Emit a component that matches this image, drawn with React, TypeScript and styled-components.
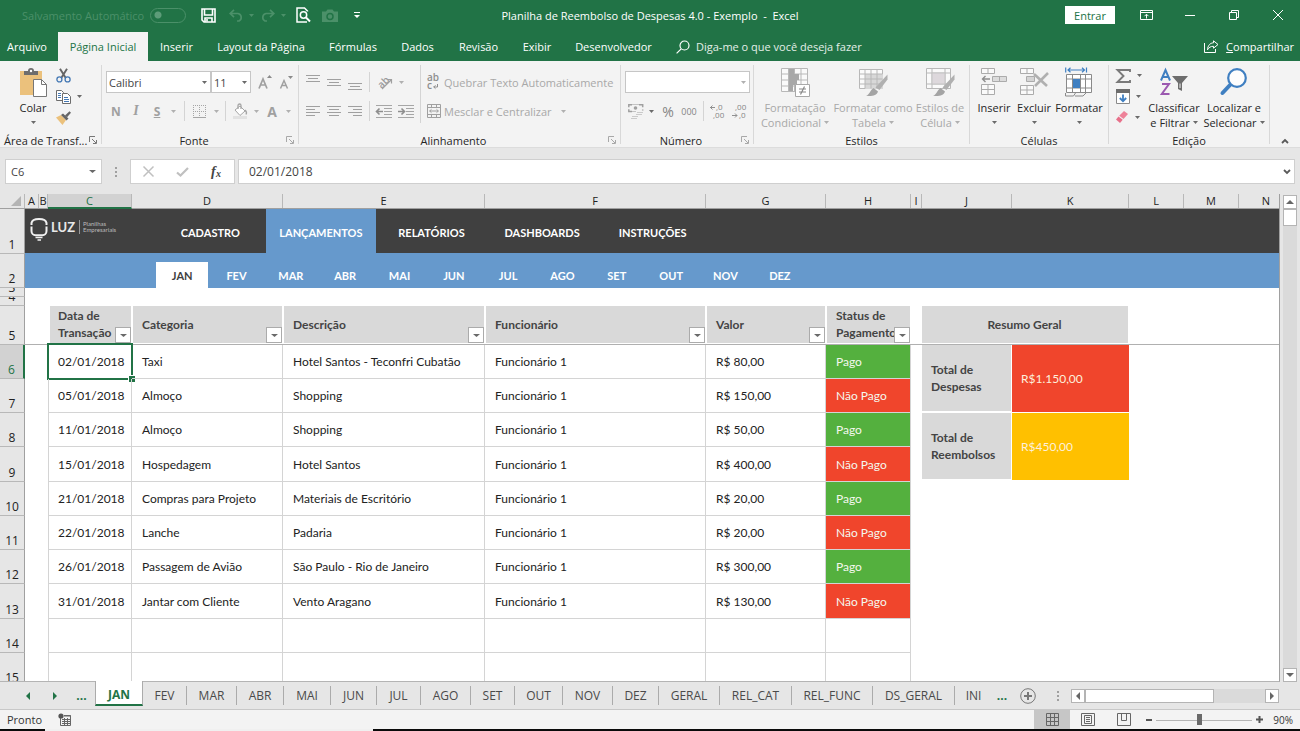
import React from "react";
import styled, { createGlobalStyle, css } from "styled-components";

const GREEN = "#217346";
const UI_FONT = '"Open Sans", "Noto Sans", sans-serif';
const CELL_FONT = 'Lato, "Open Sans", sans-serif';

const GlobalStyle = createGlobalStyle`
  * { box-sizing: border-box; }
  body { margin: 0; background: #e6e6e6; font-family: ${UI_FONT}; font-size: 11px; color: #262626; }
  button, input, select { font: inherit; color: inherit; margin: 0; padding: 0; border: 0; background: none; border-radius: 0; outline: none; }
  button { cursor: default; }
  a { color: inherit; text-decoration: none; }
  svg { display: block; flex: none; overflow: visible; }
`;

/* ---------- shell ---------- */

const Window = styled.div`
  display: flex;
  flex-direction: column;
  height: 100vh;
  overflow: hidden;
  background: #e6e6e6;
`;

const TitleBar = styled.header`
  display: grid;
  grid-template-columns: 1fr auto 1fr;
  align-items: center;
  height: 32px;
  padding-bottom: 2px;
  background: ${GREEN};
  color: #fff;
`;

const QuickAccess = styled.div`
  display: flex;
  align-items: center;
  padding-left: 22px;
`;

const AutoSave = styled.label`
  display: flex;
  align-items: center;
  gap: 6px;
  width: 165px;
  color: #4b9069;
  white-space: nowrap;
`;

const Toggle = styled.input`
  appearance: none;
  flex: none;
  width: 36px;
  height: 15px;
  border: 1px solid #4b9069;
  border-radius: 8px;
  background: radial-gradient(circle at 7px 6px, #5d9c79 3px, transparent 4px);
`;

const QuickButton = styled.button<{ $w: number; $dim?: boolean }>`
  display: flex;
  align-items: center;
  justify-content: center;
  width: ${(p) => p.$w}px;
  height: 24px;
  color: ${(p) => (p.$dim ? "#4b9069" : "#fff")};
`;

const DocTitle = styled.h1`
  margin: 0;
  font-size: 11px;
  font-weight: 400;
  white-space: pre;
`;

const WindowControls = styled.div`
  display: flex;
  align-items: center;
  justify-content: flex-end;
`;

const SignIn = styled.button`
  width: 50px;
  height: 18px;
  margin-right: 9px;
  background: #fff;
  color: ${GREEN};
`;

const WindowButton = styled.button`
  display: flex;
  align-items: center;
  justify-content: center;
  width: 44px;
  height: 30px;
`;

const MenuBar = styled.nav`
  display: flex;
  align-items: stretch;
  height: 29px;
  background: ${GREEN};
  color: #fff;
`;

const MenuTab = styled.button<{ $w: number; $active?: boolean }>`
  width: ${(p) => p.$w}px;
  white-space: nowrap;
  ${(p) => p.$active && css`background: #f3f3f3; color: ${GREEN};`}
  &:first-child { padding-right: 4px; }
`;

const TellMe = styled.label`
  display: flex;
  align-items: center;
  flex: 1;
  gap: 6px;
  padding-left: 12px;
  input { width: 200px; color: #e4efe8; }
  input::placeholder { color: #e4efe8; opacity: 1; }
`;

const Share = styled.button`
  display: flex;
  align-items: center;
  gap: 7px;
  padding-right: 6px;
`;

/* ---------- ribbon ---------- */

const Ribbon = styled.section`
  display: flex;
  height: 87px;
  padding: 4px 0 3px;
  background: #f3f3f3;
  border-bottom: 1px solid #dcdcdc;
`;

const Group = styled.div<{ $w: number }>`
  display: flex;
  flex-direction: column;
  width: ${(p) => p.$w}px;
  border-right: 1px solid #d8d8d8;
`;

const GroupBody = styled.div<{ $pad?: number }>`
  display: flex;
  flex: none;
  height: 66px;
  padding-left: ${(p) => p.$pad ?? 0}px;
`;

const GroupFooter = styled.div`
  display: flex;
  align-items: center;
  flex: none;
  height: 18px;
  text-align: center;
  white-space: nowrap;
`;

const GroupName = styled.span<{ $start?: boolean }>`
  flex: 1;
  ${(p) => p.$start && css`padding-left: 4px; text-align: left;`}
`;

const LauncherButton = styled.button`
  width: 12px;
`;

const Rows = styled.div<{ $w?: number; $pad?: number }>`
  display: flex;
  flex-direction: column;
  gap: 7px;
  padding-top: 6px;
  padding-left: ${(p) => p.$pad ?? 0}px;
  width: ${(p) => (p.$w ? p.$w + "px" : "auto")};
`;

const Row = styled.div`
  display: flex;
  align-items: center;
  height: 22px;
`;

const Tool = styled.button<{ $w: number }>`
  display: flex;
  align-items: center;
  justify-content: center;
  flex: none;
  width: ${(p) => p.$w}px;
  height: 22px;
  color: #a0a0a0;
`;

const Gap = styled.span<{ $w: number }>`
  flex: none;
  width: ${(p) => p.$w}px;
`;

const Letter = styled.span<{ $kind?: "italic" | "underline"; $size?: number; $light?: boolean }>`
  font-size: ${(p) => p.$size ?? 12}px;
  font-weight: ${(p) => (p.$light ? 400 : 700)};
  ${(p) => p.$light && css`color: #858585;`}
  ${(p) => p.$kind === "italic" && css`font-family: "Liberation Serif", serif; font-style: italic; font-size: 14px;`}
  ${(p) => p.$kind === "underline" && css`text-decoration: underline;`}
`;

const ToolText = styled.button<{ $gap?: number }>`
  display: flex;
  align-items: center;
  gap: ${(p) => p.$gap ?? 3}px;
  height: 22px;
  color: #a8a8a8;
  white-space: nowrap;
`;

const Divider = styled.span<{ $h?: number }>`
  flex: none;
  width: 1px;
  height: ${(p) => p.$h ?? 20}px;
  background: #d4d4d4;
`;

const SelectBox = styled.div<{ $w: number }>`
  position: relative;
  width: ${(p) => p.$w}px;
  height: 22px;
  select {
    appearance: none;
    width: 100%;
    height: 22px;
    padding-left: 2px;
    border: 1px solid #c6c6c6;
    background: #fff;
    color: #444;
  }
  svg { position: absolute; right: 4px; top: 10px; pointer-events: none; }
`;

const BigTool = styled.button<{ $w: number; $dim?: boolean }>`
  display: flex;
  flex-direction: column;
  align-items: center;
  flex: none;
  width: ${(p) => p.$w}px;
  height: 66px;
  padding-top: 3px;
  line-height: 15px;
  white-space: nowrap;
  color: ${(p) => (p.$dim ? "#a8a8a8" : "#262626")};
  > svg:first-child { height: 29px; margin-bottom: 3px; }
  > svg:last-child { margin-top: 6px; }
`;

const CaretLine = styled.span`
  display: flex;
  align-items: center;
  gap: 3px;
`;

const ToolStack = styled.div<{ $w: number }>`
  display: flex;
  flex-direction: column;
  width: ${(p) => p.$w}px;
`;

const StackTool = styled.button`
  display: flex;
  align-items: center;
  gap: 6px;
  height: 21px;
`;

const RibbonEnd = styled.div`
  display: flex;
  flex: 1;
  align-items: flex-end;
  justify-content: center;
`;

/* ---------- formula bar ---------- */

const FormulaBar = styled.div`
  display: flex;
  height: 46px;
  padding: 11px 5px 10px;
`;

const NameBox = styled.div`
  display: flex;
  align-items: center;
  justify-content: space-between;
  width: 97px;
  padding: 0 5px;
  border: 1px solid #cfcfcf;
  background: #fff;
  input { width: 60px; color: #444; }
`;

const Grip = styled.div<{ $w: number }>`
  display: flex;
  align-items: center;
  justify-content: center;
  width: ${(p) => p.$w}px;
`;

const EntryButtons = styled.div`
  display: flex;
  align-items: center;
  width: 105px;
  border: 1px solid #cfcfcf;
  background: #fff;
`;

const EntryButton = styled.button`
  display: flex;
  justify-content: center;
  width: 34px;
  color: #c0c0c0;
`;

const FormulaField = styled.div`
  display: flex;
  flex: 1;
  align-items: center;
  margin-left: 3px;
  padding: 0 3px 0 10px;
  border: 1px solid #cfcfcf;
  background: #fff;
  input { flex: 1; font-size: 12px; color: #444; }
`;

/* ---------- sheet ---------- */

const Workspace = styled.main`
  display: flex;
  flex: 1;
  min-height: 0;
`;

const SheetPane = styled.div`
  display: flex;
  flex: 1;
  flex-direction: column;
  min-width: 0;
  border-right: 1px solid #a0a0a0;
  border-bottom: 1px solid #b4b4b4;
  overflow: hidden;
`;

const ColumnHeads = styled.div`
  display: flex;
  flex: none;
  height: 15px;
  border-bottom: 1px solid #a0a0a0;
`;

const Corner = styled.div`
  display: flex;
  flex: none;
  justify-content: flex-end;
  width: 25px;
  padding: 2px 3px 0 0;
  border-right: 1px solid #b8b8b8;
`;

const ColumnHead = styled.div<{ $w: number; $on?: boolean }>`
  flex: none;
  width: ${(p) => p.$w}px;
  border-right: 1px solid #b8b8b8;
  font-size: 11px;
  line-height: 14px;
  text-align: center;
  color: #222;
  ${(p) => p.$on && css`height: 15px; background: #d2d2d2; color: ${GREEN}; border-bottom: 2px solid ${GREEN};`}
`;

const SheetBody = styled.div`
  display: flex;
  flex: 1;
  min-height: 0;
`;

const RowHeads = styled.div`
  flex: none;
  width: 25px;
  overflow: hidden;
`;

const RowHead = styled.div<{ $h: number; $on?: boolean }>`
  display: flex;
  align-items: flex-end;
  justify-content: center;
  height: ${(p) => p.$h}px;
  overflow: hidden;
  border-right: 1px solid #a0a0a0;
  border-bottom: 1px solid #b8b8b8;
  font-size: 12px;
  line-height: 16px;
  color: #222;
  ${(p) => p.$on && css`background: #d2d2d2; color: ${GREEN}; border-right: 2px solid ${GREEN};`}
`;

const Canvas = styled.div`
  flex: 1;
  min-width: 0;
  overflow: hidden;
  background: #fff;
  font-family: ${CELL_FONT};
  font-size: 12px;
`;

const SiteNav = styled.nav`
  display: flex;
  height: 44px;
  background: #404040;
  color: #fff;
`;

const Brand = styled.a`
  display: flex;
  align-items: flex-start;
  width: 130px;
  padding: 8px 0 0 5px;
`;

const BrandName = styled.span`
  padding: 0 4px 0 3px;
  font-size: 13px;
  font-weight: 700;
  line-height: 20px;
  color: #e8e8e8;
`;

const BrandTag = styled.span`
  margin-top: 3px;
  padding: 1px 0 1px 3px;
  border-left: 1px solid #999;
  font-size: 6px;
  line-height: 6px;
  color: #bdbdbd;
`;

const NavLinks = styled.div`
  display: grid;
  grid-template-columns: repeat(5, 1fr);
  width: 553px;
  font-size: 11px;
`;

const NavLink = styled.a<{ $on?: boolean }>`
  display: flex;
  align-items: center;
  justify-content: center;
  padding-top: 2px;
  font-weight: 700;
  background: ${(p) => (p.$on ? "#6699cc" : "transparent")};
`;

const MonthBar = styled.nav`
  height: 35px;
  padding: 9px 0 0 130px;
  background: #6699cc;
  font-size: 11px;
`;

const Months = styled.div`
  display: grid;
  grid-template-columns: repeat(12, 1fr);
  width: 652px;
  height: 26px;
`;

const Month = styled.a<{ $on?: boolean }>`
  display: flex;
  align-items: center;
  justify-content: center;
  margin: 0 1px;
  font-weight: 700;
  color: ${(p) => (p.$on ? "#404040" : "#fff")};
  background: ${(p) => (p.$on ? "#fff" : "transparent")};
`;

/* The frozen-pane line runs under both tables' header rows. */
const Content = styled.div`
  display: flex;
  align-items: flex-start;
  margin-top: 17px;
  padding-left: 23px;
  background: linear-gradient(#b0b0b0, #b0b0b0) 0 39px / 100% 1px no-repeat;
`;

const Grid = styled.table<{ $w: number }>`
  flex: none;
  width: ${(p) => p.$w}px;
  table-layout: fixed;
  border-collapse: separate;
  border-spacing: 0;
`;

const HeadCell = styled.th`
  position: relative;
  height: 40px;
  padding: 0 9px 1px;
  border: solid transparent;
  border-width: 1px 1px 2px 1px;
  background: #d9d9d9 padding-box;
  color: #444;
  font-weight: 700;
  line-height: 17px;
  text-align: left;
  white-space: nowrap;
  &:first-child { border-left-width: 2px; padding-left: 8px; }
`;

const FilterButton = styled.button`
  position: absolute;
  right: 0;
  bottom: 0;
  display: flex;
  align-items: center;
  justify-content: center;
  width: 16px;
  height: 16px;
  border: 1px solid #ababab;
  background: #fff;
`;

const Cell = styled.td<{ $h: number; $fill?: string }>`
  position: relative;
  height: ${(p) => p.$h}px;
  padding: 0 10px;
  border: solid #d4d4d4;
  border-width: 0 1px 1px 0;
  color: #222;
  white-space: nowrap;
  &:first-child { border-left-width: 1px; padding: 0 9px; }
  ${(p) => p.$fill && css`background: ${p.$fill} padding-box; color: #f4f8ee;`}
`;

const Selection = styled.span`
  position: absolute;
  inset: -2px;
  border: 2px solid ${GREEN};
  &::after {
    content: "";
    position: absolute;
    right: -4px;
    bottom: -4px;
    width: 6px;
    height: 6px;
    border: solid #fff;
    border-width: 1px 0 0 1px;
    background: ${GREEN};
  }
`;

const SummaryGap = styled.div`
  flex: none;
  width: 11px;
`;

const SummaryTitle = styled(HeadCell)`
  text-align: center;
  &:first-child { border-left-width: 0; }
`;

const SummaryLabel = styled.th`
  height: 68px;
  padding: 0 9px 1px;
  border: solid transparent;
  border-width: 0 1px 2px 0;
  background: #d9d9d9 padding-box;
  color: #444;
  line-height: 17px;
  text-align: left;
`;

const SummaryValue = styled.td<{ $fill: string }>`
  padding: 0 9px;
  border-bottom: 1px solid transparent;
  background: ${(p) => p.$fill} padding-box;
  color: #fdf0dc;
`;

/* ---------- scroll bars ---------- */

const VScroll = styled.div`
  display: flex;
  flex: none;
  flex-direction: column;
  width: 20px;
  padding: 1px 3px 0;
`;

const ScrollButton = styled.button`
  display: flex;
  flex: none;
  align-items: center;
  justify-content: center;
  width: 14px;
  height: 14px;
  border: 1px solid #b4b4b4;
  background: #fff;
`;

const VTrack = styled.div`
  flex: 1;
  background: #dadada;
`;

const VThumb = styled.div`
  height: 17px;
  border: 1px solid #b4b4b4;
  background: #fff;
`;

const HScroll = styled.div`
  display: flex;
  flex: none;
  width: 208px;
  height: 14px;
`;

const HTrack = styled.div`
  flex: 1;
  background: #dadada;
`;

const HThumb = styled.div`
  width: 129px;
  height: 14px;
  border: 1px solid #b4b4b4;
  background: #fff;
`;

/* ---------- sheet tabs and status ---------- */

const TabBar = styled.div`
  display: flex;
  flex: none;
  align-items: center;
  height: 27px;
  padding-right: 21px;
  font-size: 12px;
  color: #4a4a4a;
`;

const TabArrow = styled.button<{ $pad?: number }>`
  display: flex;
  flex: none;
  justify-content: center;
  width: 27px;
  margin-left: ${(p) => p.$pad ?? 0}px;
`;

const More = styled.button<{ $w: number }>`
  display: flex;
  flex: none;
  justify-content: center;
  width: ${(p) => p.$w}px;
  font-weight: 700;
  color: ${GREEN};
`;

const SheetTab = styled.button<{ $w: number; $on?: boolean; $last?: boolean }>`
  flex: none;
  width: ${(p) => p.$w}px;
  height: 19px;
  border-right: 1px solid ${(p) => (p.$last ? "transparent" : "#ababab")};
  white-space: nowrap;
  ${(p) => p.$on && css`
    align-self: flex-start;
    height: 25px;
    margin-top: -1px;
    padding-top: 4px;
    border: solid #ababab;
    border-width: 0 1px 0 1px;
    border-bottom: 2px solid ${GREEN};
    background: #fff;
    color: ${GREEN};
    font-weight: 700;
  `}
`;

const TabSpacer = styled.div`
  flex: 1;
`;

const StatusBar = styled.footer`
  display: flex;
  flex: none;
  align-items: center;
  height: 20px;
  padding: 0 7px;
  border-top: 1px solid #c8c8c8;
  background: #f3f3f3;
  color: #333;
`;

const StatusText = styled.span`
  width: 51px;
`;

const ViewButton = styled.button<{ $on?: boolean }>`
  display: flex;
  align-items: center;
  justify-content: center;
  width: 36px;
  height: 19px;
  background: ${(p) => (p.$on ? "#c6c6c6" : "transparent")};
`;

const ZoomButton = styled.button`
  display: flex;
  align-items: center;
  justify-content: center;
  width: 14px;
  height: 19px;
`;

const ZoomSlider = styled.input`
  appearance: none;
  width: 96px;
  height: 12px;
  background: linear-gradient(#b4b4b4, #b4b4b4) 0 6px / 100% 1px no-repeat;
  &::-webkit-slider-thumb {
    appearance: none;
    width: 5px;
    height: 11px;
    background: #6a6a6a;
  }
`;

const ZoomLevel = styled.span`
  width: 27px;
  text-align: right;
  font-size: 10px;
`;

const Taskbar = styled.div`
  flex: none;
  height: 2px;
  background: linear-gradient(90deg, #0a0a0a 45px, #f0f0f0 45px, #f0f0f0 373px, #0a0a0a 373px);
`;

/* ---------- icons ---------- */

const Caret = ({ color = "#6a6a6a", size = 5 }: { color?: string; size?: number }) => (
  <svg width={size} height="3" viewBox="0 0 6 3" preserveAspectRatio="none"><path d="M0 0h6L3 3z" fill={color} /></svg>
);

const Launcher = ({ dim }: { dim?: boolean }) => (
  <svg width="8" height="8" viewBox="0 0 8 8" fill="none" stroke={dim ? "#a8a8a8" : "#777"}>
    <path d="M.5 6V.5H6M3 3l4 4M7.500 4v3.500H4" />
  </svg>
);

const SaveIcon = () => (
  <svg width="15" height="15" viewBox="0 0 15 15" fill="none" stroke="#fff" strokeWidth="1.600">
    <path d="M1 1h13v13H3l-2-2zM3.500 1v6h8V1" /><path d="M4 14v-4h7v4" /><path d="M6 11v2.500" />
  </svg>
);

const UndoIcon = ({ flip }: { flip?: boolean }) => (
  <svg width="14" height="13" viewBox="0 0 14 13" fill="none" stroke="currentColor" strokeWidth="1.700">
    <g transform={flip ? "translate(14 0) scale(-1 1)" : undefined}><path d="M5 .8L1.200 4.500 5 8.200M1.500 4.500H9a4 4 0 0 1 1 7.500H8" /></g>
  </svg>
);

const PreviewIcon = () => (
  <svg width="15" height="16" viewBox="0 0 15 16" fill="none" stroke="#fff" strokeWidth="1.500">
    <path d="M11.500 4.500V4L8.500 1H1v14h10" /><circle cx="7.500" cy="8" r="3.200" /><path d="M10 10.500l4 4" strokeWidth="2" />
  </svg>
);

const CameraIcon = () => (
  <svg width="16" height="13" viewBox="0 0 16 13">
    <path d="M0 2.500h4L5.500.5h5l1.500 2h4V13H0z" fill="currentColor" />
    <circle cx="8" cy="7.500" r="3" fill="none" stroke={GREEN} strokeWidth="1.500" />
  </svg>
);

const SearchIcon = () => (
  <svg width="14" height="14" viewBox="0 0 14 14" fill="none" stroke="#fff" strokeWidth="1.200">
    <circle cx="8.500" cy="5.500" r="4.500" /><path d="M5.200 8.800L.6 13.400" />
  </svg>
);

const ShareIcon = () => (
  <svg width="15" height="13" viewBox="0 0 15 13" fill="none" stroke="#fff">
    <path d="M.5 3v9.500h11V9" /><path d="M9.500.8l4.500 3.700-4.500 3.700V6.300C6.500 6.200 5 7.500 3.500 9.800 3.800 5.500 6 3 9.500 2.800z" />
  </svg>
);

const PasteIcon = () => (
  <svg width="28" height="29" viewBox="0 0 28 29">
    <path d="M1 3h22v24H1z" fill="#ebc17c" />
    <path d="M5 7V3h4a3 3 0 0 1 6 0h4v4z" fill="#6d6d6d" /><circle cx="12" cy="3" r="1.200" fill="#fff" />
    <path d="M14.500 11.500h8l5 5v12h-13z" fill="#fff" stroke="#777" /><path d="M22.500 11.500v5h5" fill="none" stroke="#777" />
  </svg>
);

const ScissorsIcon = () => (
  <svg width="15" height="15" viewBox="0 0 15 15" fill="none">
    <path d="M4 .8l5.600 9M11 .8l-5.600 9" stroke="#666" strokeWidth="1.900" />
    <circle cx="3.400" cy="11.400" r="2.500" stroke="#4478b4" strokeWidth="1.300" /><circle cx="11.600" cy="11.400" r="2.500" stroke="#4478b4" strokeWidth="1.300" />
  </svg>
);

const CopyIcon = () => (
  <svg width="15" height="14" viewBox="0 0 15 14" fill="#fff" stroke="#6d6d6d">
    <path d="M.5.5h5l2 2v8h-7z" /><path d="M2 3.500h3M2 5.500h3M2 7.500h3" stroke="#4478b4" />
    <path d="M6.500 3.500h5l3 3v7h-8z" /><path d="M8 7.500h4M8 9.500h5M8 11.500h5" stroke="#4478b4" />
  </svg>
);

const BrushIcon = () => (
  <svg width="15" height="14" viewBox="0 0 15 14">
    <path d="M0 6.500l5-2.500 5 5-3.500 5z" fill="#ebc17c" /><path d="M5 4l2-1.500 5.500 5-2 2z" fill="#666" /><path d="M9 4.500L13.500.2l1.500 1.500-4 4.500z" fill="#666" />
  </svg>
);

const GrowIcon = ({ up }: { up?: boolean }) => (
  <svg width="14" height="15" viewBox="0 0 14 15" fill="none" stroke="#a0a0a0">
    {up ? <path d="M1 13.500L5 4l4 9.500M2.500 10h5" strokeWidth="1.700" /> : <path d="M1.500 13.500L5 5.500l3.500 8M3 10.500h4" strokeWidth="1.500" />}
    {up ? <path d="M9 3h5l-2.500-3z" fill="#8a8a8a" stroke="none" /> : <path d="M9 1h5l-2.500 3z" fill="#8a8a8a" stroke="none" />}
  </svg>
);

const BordersIcon = () => (
  <svg width="13" height="13" viewBox="0 0 13 13" fill="none" stroke="#a6a6a6">
    <path d="M.5 0v13M6.500 0v13M12.500 0v13M0 .5h13M0 6.500h13" strokeDasharray="1 1" /><path d="M0 12.500h13" />
  </svg>
);

const BucketIcon = () => (
  <svg width="15" height="15" viewBox="0 0 15 15" fill="none" stroke="#a6a6a6">
    <path d="M2 6l5-4 5 5-5 4.500z" fill="#fff" /><path d="M5 5V1.500a1.500 1.500 0 0 1 3 0V5M12 6c1.500 1.500 2 3 1 4.500" strokeWidth="1.300" /><path d="M0 13.500h14" stroke="#e2e2e2" strokeWidth="3" />
  </svg>
);

const LinesIcon = ({ lines, top = 0, height = 14 }: { lines: [number, number][]; top?: number; height?: number }) => (
  <svg width="14" height={height} viewBox={`0 0 14 ${height}`} stroke="#a0a0a0">
    {lines.map(([x, w], i) => <path key={i} d={`M${x} ${top + i * 3 + 0.5}h${w}`} />)}
  </svg>
);

const AngleTextIcon = () => (
  <svg width="17" height="16" viewBox="0 0 17 16" fill="none" stroke="#a0a0a0" strokeWidth="1.200">
    <text x="-6" y="4" transform="translate(7 8) rotate(-45)" fontSize="10" fontWeight="600" fill="#9a9a9a" stroke="none">ab</text>
    <path d="M6 15l9-9M11.500 5.500h4v4" />
  </svg>
);

const IndentIcon = ({ right }: { right?: boolean }) => (
  <svg width="16" height="13" viewBox="0 0 16 13" fill="none" stroke="#a6a6a6">
    <path d="M0 .5h16M8 3.500h8M8 6.500h8M8 9.500h8M0 12.500h16" />
    <path d={right ? "M0 6.500h6M3.500 3.500l3 3-3 3" : "M1 6.500h6M3.500 3.500l-3 3 3 3"} strokeWidth="1.600" stroke="#8e8e8e" />
  </svg>
);

const WrapIcon = () => (
  <svg width="14" height="16" viewBox="0 0 14 16" fill="none" stroke="#8e8e8e">
    <text x="0" y="7" fontSize="10" fontWeight="600" fill="#8e8e8e" stroke="none">ab</text>
    <text x="0" y="15" fontSize="10" fontWeight="600" fill="#8e8e8e" stroke="none">c</text>
    <path d="M10.500 10v3H6.500M8.500 11.300L6.800 13l1.700 1.700" />
  </svg>
);

const MergeIcon = () => (
  <svg width="14" height="14" viewBox="0 0 14 14" fill="none" stroke="#a0a0a0">
    <path d="M.5.5h13v13H.5zM.5 3.500h13M.5 10.500h13M4.500.5v3M9.500.5v3M4.500 10.500v3M9.500 10.500v3M2.500 7h9M4.500 5.300L2.700 7l1.800 1.700M9.500 5.300L11.300 7 9.500 8.700" />
  </svg>
);

const MoneyIcon = () => (
  <svg width="16" height="15" viewBox="0 0 16 15" fill="none" stroke="#a0a0a0">
    <path d="M4 .8H.8v2.400M11 .8h3.700v2.400M4 7.500H.8V5.200M14.700 5.500v1" strokeWidth="1.500" /><path d="M4 .5h7M4 7.500h4" stroke="#c4c4c4" /><circle cx="7.500" cy="4" r="1.800" fill="#a0a0a0" stroke="none" />
    <path d="M9 8.500h6M8 10.500h6M4 12.500h6M3 14.500h6" stroke="#cacaca" />
  </svg>
);

const DecimalIcon = ({ less }: { less?: boolean }) => (
  <svg width="15" height="15" viewBox="0 0 15 15" fill="#858585" fontSize="8">
    <text x={less ? 3 : 6} y="6">{less ? ",00" : ",0"}</text>
    <text x={less ? 7 : 3} y="14">{less ? ",0" : ",00"}</text>
    <path d={less ? "M0 11.500h5M3 9.500l2 2-2 2" : "M0 3.500h5M2.500 1.500l-2 2 2 2"} stroke="#909090" fill="none" />
  </svg>
);

const CondFormatIcon = () => (
  <svg width="29" height="29" viewBox="0 0 29 29">
    <path d="M.5.500h26v23H.500zM.5 6h26M.5 12h26M.5 18h26M7.500.5v23M13.500.5v23M20 .5v23" fill="#fafafa" stroke="#b8b8b8" />
    <path d="M8 1h5v5H8zM8 6h10v6H8zM8 12h8v5H8zM8 17h4v6H8z" fill="#a8a8a8" />
    <path d="M14.500 16.500h14v12h-14z" fill="#fff" stroke="#a8a8a8" />
    <path d="M18 21h7M18 24h7M23.500 18.500l-4 8" stroke="#888" fill="none" strokeWidth="1.200" />
  </svg>
);

const PaintBrush = () => (
  <>
    <path d="M28.500 6.500v5l-8 10.500-4-2.500z" fill="#b0b0b0" />
    <path d="M14.500 20l4.500 3.500c-1.500 4-5 5-12 4.500 3.500-1 4-6 7.500-8z" fill="#a4a4a4" />
  </>
);

const TableFormatIcon = () => (
  <svg width="29" height="29" viewBox="0 0 29 29">
    <path d="M.5 1.500h23v19H.500z" fill="#fafafa" stroke="#b8b8b8" /><path d="M6 6h18v15H6z" fill="#d8d8d8" />
    <path d="M.5 6h23M.5 11h23M.5 16h23M6 1.500v19M12 1.500v19M18 1.500v19" stroke="#b8b8b8" /><PaintBrush />
  </svg>
);

const CellStyleIcon = () => (
  <svg width="29" height="29" viewBox="0 0 29 29">
    <path d="M.5.500h24v20H.500zM.5 5h24M.5 16h24M6 .5v20M19 .5v20" fill="#fafafa" stroke="#b8b8b8" />
    <path d="M6 5h13v11H6z" fill="#ddd8dc" stroke="#c4c4c4" /><PaintBrush />
  </svg>
);

const InsertIcon = () => (
  <svg width="26" height="29" viewBox="0 0 26 29" fill="#fafafa" stroke="#ababab">
    <path d="M.5.500h13v5H.500zM7 .5v5M.5 16.500h13v10H.500zM7 16.500v10M.5 21.500h13" />
    <path d="M11.500 8.500h14v5h-14zM18.500 8.500v5" fill="#dcdcdc" /><path d="M9 11H2M4.500 8l-3 3 3 3" stroke="#8e8e8e" strokeWidth="1.400" fill="none" />
  </svg>
);

const DeleteIcon = () => (
  <svg width="29" height="29" viewBox="0 0 29 29" fill="#fafafa" stroke="#ababab">
    <path d="M.5.500h13v5H.500zM7 .5v5M.5 17.500h13v9H.500zM7 17.500v9M.5 22h13" />
    <path d="M6.500 8.500h8v5h-8z" fill="#d4d4d4" /><path d="M14 6l13 12M28 5L15 18" strokeWidth="2.600" stroke="#b0b0b0" fill="none" />
  </svg>
);

const FormatIcon = () => (
  <svg width="28" height="29" viewBox="0 0 28 29" fill="#fff" stroke="#8a8a8a">
    <path d="M1.500 6.500h25v18h-25zM1.500 11h25M1.500 20h25M7.500 6.500v18M15.500 6.500v18M20.500 6.500v18" /><path d="M8 11h7v9H8z" fill="#3f7fc1" stroke="none" />
    <path d="M.5 25v3h8l2-3M10 28h8l3-3" fill="none" />
    <path d="M.7-.500v5M21.500-.500v5M3 2h16M5.500-.200L3 2l2.500 2.200M17-.200L19.500 2 17 4.200" stroke="#3f7fc1" strokeWidth="1.200" fill="none" />
  </svg>
);

const SumIcon = () => (
  <svg width="15" height="14" viewBox="0 0 15 14" fill="none" stroke="#7a7a7a" strokeWidth="1.900"><path d="M14 3V1H1.500l6 6-6 6H14v-2" /></svg>
);

const FillIcon = () => (
  <svg width="14" height="15" viewBox="0 0 14 15"><path d="M.5.500h13v14H.500z" fill="#fff" stroke="#8a8a8a" /><path d="M0 0h14v4H0z" fill="#6d6d6d" /><path d="M7 5.500v7M3.800 9L7 12.200 10.200 9" fill="none" stroke="#3f7fc1" strokeWidth="1.800" /></svg>
);

const EraserIcon = () => (
  <svg width="13" height="13" viewBox="0 0 13 13"><path d="M8 0l4 3-4.500 5L3.200 4.700z" fill="#ee8299" /><path d="M2.500 5.500l4.200 3.300L4 12 0 8.500z" fill="#e8708a" /></svg>
);

const SortIcon = () => (
  <svg width="28" height="29" viewBox="0 0 28 29" fill="none">
    <path d="M1 12.500L5.500 2 10 12.500M2.800 9h5.500" stroke="#3f7fc1" strokeWidth="2" />
    <path d="M2 16h7L1.800 26H9.500" stroke="#9b59b0" strokeWidth="2" />
    <path d="M12 8h16l-6 7v8l-4-2v-6z" fill="#6d6d6d" /><path d="M20 15.500v4.500" stroke="#f3f3f3" />
  </svg>
);

const FindIcon = () => (
  <svg width="28" height="29" viewBox="0 0 28 29"><path d="M10 17L2.500 25" stroke="#3f7fc1" strokeWidth="4" strokeLinecap="round" /><circle cx="17" cy="10" r="8.800" fill="#fdfdfd" stroke="#3f7fc1" strokeWidth="2.200" /></svg>
);

const Chevron = ({ up }: { up?: boolean }) => (
  <svg width="8" height="6" viewBox="0 0 8 6" fill="none" stroke="#5a5a5a" strokeWidth="1.800"><path d={up ? "M1 5l3-3 3 3" : "M1 1l3 3 3-3"} /></svg>
);

const DotsIcon = () => (
  <svg width="2" height="10" viewBox="0 0 2 10" fill="#a0a0a0"><path d="M0 0h2v2H0zM0 4h2v2H0zM0 8h2v2H0z" /></svg>
);

const ArrowIcon = ({ dir, color = "#666" }: { dir: "up" | "down" | "left" | "right"; color?: string }) => {
  const d = { up: "M0 6h8L4 2z", down: "M0 2h8L4 6z", left: "M6 0v8L2 4z", right: "M2 0v8l4-4z" }[dir];
  return <svg width="8" height="8" viewBox="0 0 8 8"><path d={d} fill={color} /></svg>;
};

const BulbIcon = () => (
  <svg width="18" height="25" viewBox="0 0 18 25" fill="none" stroke="#f0f0f0">
    <path d="M1.500 8V6C2 3 4.500 2 9 2s7 1 7.500 4v2" strokeWidth="2" />
    <path d="M1.500 9.500V14c0 2.500 2 4.200 4 4.200h7c2 0 4-1.700 4-4.200V9.500" strokeWidth="2" />
    <path d="M5.500 20.500h7M7.500 23h3.500" strokeWidth="1.600" />
  </svg>
);

/* ---------- data ---------- */

const menuTabs: [string, number][] = [
  ["Arquivo", 58], ["Página Inicial", 90], ["Inserir", 57], ["Layout da Página", 112], ["Fórmulas", 72],
  ["Dados", 57], ["Revisão", 65], ["Exibir", 52], ["Desenvolvedor", 101],
];

const columns: [string, number][] = [
  ["A", 14], ["B", 9], ["C", 84], ["D", 151], ["E", 202], ["F", 221], ["G", 120], ["H", 85],
  ["I", 11], ["J", 90], ["K", 117], ["L", 55], ["M", 55], ["N", 55],
];

const rowHeights = [45, 34, 9, 9, 39, 34, 34, 34, 35, 34, 34, 34, 35, 34, 34];

const tableColumns: [string, number][] = [
  ["Data de\nTransação", 84], ["Categoria", 151], ["Descrição", 202], ["Funcionário", 221], ["Valor", 120], ["Status de\nPagamento", 85],
];

const expenses = [
  ["02/01/2018", "Taxi", "Hotel Santos - Teconfri Cubatão", "Funcionário 1", "R$ 80,00", "Pago"],
  ["05/01/2018", "Almoço", "Shopping", "Funcionário 1", "R$ 150,00", "Não Pago"],
  ["11/01/2018", "Almoço", "Shopping", "Funcionário 1", "R$ 50,00", "Pago"],
  ["15/01/2018", "Hospedagem", "Hotel Santos", "Funcionário 1", "R$ 400,00", "Não Pago"],
  ["21/01/2018", "Compras para Projeto", "Materiais de Escritório", "Funcionário 1", "R$ 20,00", "Pago"],
  ["22/01/2018", "Lanche", "Padaria", "Funcionário 1", "R$ 20,00", "Não Pago"],
  ["26/01/2018", "Passagem de Avião", "São Paulo - Rio de Janeiro", "Funcionário 1", "R$ 300,00", "Pago"],
  ["31/01/2018", "Jantar com Cliente", "Vento Aragano", "Funcionário 1", "R$ 130,00", "Não Pago"],
  ["", "", "", "", "", ""],
  ["", "", "", "", "", ""],
];

const statusFill: Record<string, string> = { Pago: "#54b03e", "Não Pago": "#f0452c" };

const sections = ["CADASTRO", "LANÇAMENTOS", "RELATÓRIOS", "DASHBOARDS", "INSTRUÇÕES"];
const months = ["JAN", "FEV", "MAR", "ABR", "MAI", "JUN", "JUL", "AGO", "SET", "OUT", "NOV", "DEZ"];

const sheetTabs: [string, number][] = [
  ["JAN", 48], ["FEV", 44], ["MAR", 50], ["ABR", 47], ["MAI", 47], ["JUN", 46], ["JUL", 44], ["AGO", 50], ["SET", 44],
  ["OUT", 48], ["NOV", 50], ["DEZ", 46], ["GERAL", 61], ["REL_CAT", 72], ["REL_FUNC", 81], ["DS_GERAL", 82], ["INI", 38],
];

/* ---------- parts ---------- */

const RibbonGroup = ({ name, width, pad, launcher, start, children }: {
  name: string; width: number; pad?: number; launcher?: "on" | "dim"; start?: boolean; children: React.ReactNode;
}) => (
  <Group $w={width}>
    <GroupBody $pad={pad}>{children}</GroupBody>
    <GroupFooter>
      <GroupName $start={start}>{name}</GroupName>
      {launcher && <LauncherButton aria-label={`Opções de ${name}`}><Launcher dim={launcher === "dim"} /></LauncherButton>}
    </GroupFooter>
  </Group>
);

const RibbonView = () => (
  <Ribbon>
    <RibbonGroup name="Área de Transf..." width={102} pad={10} launcher="on" start>
      <BigTool $w={46}><PasteIcon />Colar<Caret /></BigTool>
      <ToolStack $w={40}>
        <StackTool aria-label="Recortar"><ScissorsIcon /></StackTool>
        <StackTool aria-label="Copiar"><CopyIcon /><Caret /></StackTool>
        <StackTool aria-label="Pincel de formatação"><BrushIcon /></StackTool>
      </ToolStack>
    </RibbonGroup>

    <RibbonGroup name="Fonte" width={197} pad={4} launcher="dim">
      <Rows>
        <Row>
          <SelectBox $w={105}><select aria-label="Fonte"><option>Calibri</option></select><Caret /></SelectBox>
          <SelectBox $w={40}><select aria-label="Tamanho"><option>11</option></select><Caret /></SelectBox>
          <Tool $w={28} aria-label="Aumentar fonte"><GrowIcon up /></Tool>
          <Tool $w={14} aria-label="Diminuir fonte"><GrowIcon /></Tool>
        </Row>
        <Row>
          <Tool $w={20}><Letter>N</Letter></Tool>
          <Tool $w={20}><Letter $kind="italic">I</Letter></Tool>
          <Tool $w={22}><Letter $kind="underline">S</Letter></Tool>
          <Tool $w={10} aria-label="Sublinhados"><Caret color="#b0b0b0" /></Tool>
          <Gap $w={6} />
          <Divider />
          <Tool $w={28} aria-label="Bordas"><BordersIcon /></Tool>
          <Tool $w={6} aria-label="Mais bordas"><Caret color="#b0b0b0" /></Tool>
          <Gap $w={6} />
          <Divider />
          <Tool $w={28} aria-label="Preenchimento"><BucketIcon /></Tool>
          <Tool $w={4} aria-label="Cores de preenchimento"><Caret color="#b0b0b0" /></Tool>
          <Tool $w={28}><Letter $size={14}>A</Letter></Tool>
          <Tool $w={4} aria-label="Cores da fonte"><Caret color="#b0b0b0" /></Tool>
        </Row>
      </Rows>
    </RibbonGroup>

    <RibbonGroup name="Alinhamento" width={322} pad={3} launcher="dim">
      <Rows $w={118}>
        <Row>
          <Tool $w={21} aria-label="Alinhar acima"><LinesIcon lines={[[0, 14], [2, 10], [0, 14]]} /></Tool>
          <Tool $w={21} aria-label="Alinhar no meio"><LinesIcon top={4} lines={[[0, 14], [2, 10], [0, 14]]} /></Tool>
          <Tool $w={21} aria-label="Alinhar abaixo"><LinesIcon top={8} lines={[[0, 14], [2, 10], [0, 14]]} /></Tool>
          <Gap $w={4} />
          <Divider />
          <Tool $w={28} aria-label="Orientação"><AngleTextIcon /></Tool>
          <Tool $w={6} aria-label="Mais orientações"><Caret color="#b0b0b0" /></Tool>
        </Row>
        <Row>
          <Tool $w={21} aria-label="À esquerda"><LinesIcon lines={[[0, 14], [0, 9], [0, 14], [0, 9]]} height={10} /></Tool>
          <Tool $w={21} aria-label="Centralizar"><LinesIcon lines={[[0, 14], [2, 10], [0, 14], [2, 10]]} height={10} /></Tool>
          <Tool $w={21} aria-label="À direita"><LinesIcon lines={[[0, 14], [5, 9], [0, 14], [5, 9]]} height={10} /></Tool>
          <Gap $w={4} />
          <Divider />
          <Tool $w={28} aria-label="Diminuir recuo"><IndentIcon /></Tool>
          <Tool $w={16} aria-label="Aumentar recuo"><IndentIcon right /></Tool>
        </Row>
      </Rows>
      <Divider $h={58} />
      <Rows $pad={6}>
        <ToolText><WrapIcon />Quebrar Texto Automaticamente</ToolText>
        <ToolText><MergeIcon />Mesclar e Centralizar<Gap $w={3} /><Caret color="#b0b0b0" /></ToolText>
      </Rows>
    </RibbonGroup>

    <RibbonGroup name="Número" width={133} pad={4} launcher="dim">
      <Rows>
        <Row>
          <SelectBox $w={125}><select aria-label="Formato de número"><option></option></select><Caret color="#b0b0b0" /></SelectBox>
        </Row>
        <Row>
          <Tool $w={21} aria-label="Moeda"><MoneyIcon /></Tool>
          <Tool $w={10} aria-label="Outras moedas"><Caret /></Tool>
          <Tool $w={24}><Letter $size={14} $light>%</Letter></Tool>
          <Tool $w={18}><Letter $size={9} $light>000</Letter></Tool>
          <Gap $w={5} />
          <Divider />
          <Tool $w={26} aria-label="Aumentar casas decimais"><DecimalIcon /></Tool>
          <Tool $w={18} aria-label="Diminuir casas decimais"><DecimalIcon less /></Tool>
        </Row>
      </Rows>
    </RibbonGroup>

    <RibbonGroup name="Estilos" width={216} pad={1}>
      <BigTool $w={80} $dim><CondFormatIcon />Formatação<CaretLine>Condicional<Caret color="#b0b0b0" /></CaretLine></BigTool>
      <BigTool $w={76} $dim><TableFormatIcon />Formatar como<CaretLine>Tabela<Caret color="#b0b0b0" /></CaretLine></BigTool>
      <BigTool $w={58} $dim><CellStyleIcon />Estilos de<CaretLine>Célula<Caret color="#b0b0b0" /></CaretLine></BigTool>
    </RibbonGroup>

    <RibbonGroup name="Células" width={139} pad={4}>
      <BigTool $w={40}><InsertIcon />Inserir<Caret /></BigTool>
      <BigTool $w={40}><DeleteIcon />Excluir<Caret /></BigTool>
      <BigTool $w={50}><FormatIcon />Formatar<Caret /></BigTool>
    </RibbonGroup>

    <RibbonGroup name="Edição" width={161} pad={7}>
      <ToolStack $w={30}>
        <StackTool aria-label="Soma"><SumIcon /><Caret /></StackTool>
        <StackTool aria-label="Preencher"><FillIcon /><Caret /></StackTool>
        <StackTool aria-label="Limpar"><EraserIcon /><Caret /></StackTool>
      </ToolStack>
      <BigTool $w={56}><SortIcon />Classificar<CaretLine>e Filtrar<Caret /></CaretLine></BigTool>
      <BigTool $w={64}><FindIcon />Localizar e<CaretLine>Selecionar<Caret /></CaretLine></BigTool>
    </RibbonGroup>

    <RibbonEnd><button aria-label="Recolher faixa de opções"><Chevron up /></button></RibbonEnd>
  </Ribbon>
);

const ExpenseTable = () => (
  <Grid $w={863}>
    <colgroup>{tableColumns.map(([name, w]) => <col key={name} width={w} />)}</colgroup>
    <thead>
      <tr>
        {tableColumns.map(([name]) => (
          <HeadCell key={name} scope="col">
            {name.split("\n").map((line, i) => <React.Fragment key={line}>{i > 0 && <br />}{line}</React.Fragment>)}
            <FilterButton aria-label="Filtrar"><Caret size={7} /></FilterButton>
          </HeadCell>
        ))}
      </tr>
    </thead>
    <tbody>
      {expenses.map((row, r) => (
        <tr key={r}>
          {row.map((text, c) => (
            <Cell key={c} $h={rowHeights[r + 5]} $fill={statusFill[text]}>
              {text}
              {r === 0 && c === 0 && <Selection />}
            </Cell>
          ))}
        </tr>
      ))}
    </tbody>
  </Grid>
);

const SummaryTable = () => (
  <Grid $w={207}>
    <colgroup><col width={90} /><col width={117} /></colgroup>
    <thead><tr><SummaryTitle colSpan={2} scope="colgroup">Resumo Geral</SummaryTitle></tr></thead>
    <tbody>
      <tr><SummaryLabel scope="row">Total de<br />Despesas</SummaryLabel><SummaryValue $fill="#f0452c">R$1.150,00</SummaryValue></tr>
      <tr><SummaryLabel scope="row">Total de<br />Reembolsos</SummaryLabel><SummaryValue $fill="#ffc000">R$450,00</SummaryValue></tr>
    </tbody>
  </Grid>
);

export default function App() {
  return (
    <Window>
      <GlobalStyle />
      <TitleBar>
        <QuickAccess>
          <AutoSave>Salvamento Automático<Toggle type="checkbox" /></AutoSave>
          <QuickButton $w={42} aria-label="Salvar"><SaveIcon /></QuickButton>
          <QuickButton $w={14} $dim aria-label="Desfazer"><UndoIcon /></QuickButton>
          <QuickButton $w={16} $dim aria-label="Opções de desfazer"><Caret color="#4b9069" /></QuickButton>
          <QuickButton $w={18} $dim aria-label="Refazer"><UndoIcon flip /></QuickButton>
          <QuickButton $w={12} $dim aria-label="Opções de refazer"><Caret color="#4b9069" /></QuickButton>
          <QuickButton $w={28} aria-label="Visualizar impressão"><PreviewIcon /></QuickButton>
          <QuickButton $w={26} $dim aria-label="Câmera"><CameraIcon /></QuickButton>
          <QuickButton $w={28} aria-label="Personalizar">
            <svg width="6" height="6" viewBox="0 0 6 6" fill="#fff"><path d="M0 0h6v1H0zM0 3h6L3 6z" /></svg>
          </QuickButton>
        </QuickAccess>
        <DocTitle>{"Planilha de Reembolso de Despesas 4.0 - Exemplo  -  Excel"}</DocTitle>
        <WindowControls>
          <SignIn>Entrar</SignIn>
          <WindowButton aria-label="Opções da faixa">
            <svg width="13" height="10" viewBox="0 0 13 10" fill="none" stroke="#fff"><path d="M.5.500h12v9H.500zM.5 2.500h12M6.500 8.500v-4M4.500 6.200l2-2 2 2" /></svg>
          </WindowButton>
          <WindowButton aria-label="Minimizar"><svg width="10" height="1"><path d="M0 .5h10" stroke="#fff" /></svg></WindowButton>
          <WindowButton aria-label="Restaurar">
            <svg width="10" height="10" viewBox="0 0 10 10" fill="none" stroke="#fff"><path d="M.5 2.500h7v7h-7zM2.500 2.500v-2h7v7h-2" /></svg>
          </WindowButton>
          <WindowButton aria-label="Fechar">
            <svg width="10" height="10" viewBox="0 0 10 10" stroke="#fff"><path d="M0 0l10 10M10 0L0 10" /></svg>
          </WindowButton>
        </WindowControls>
      </TitleBar>

      <MenuBar>
        {menuTabs.map(([name, w], i) => <MenuTab key={name} $w={w} $active={i === 1}>{name}</MenuTab>)}
        <TellMe><SearchIcon /><input aria-label="Pesquisar comando" placeholder="Diga-me o que você deseja fazer" /></TellMe>
        <Share><ShareIcon /><span><u>C</u>ompartilhar</span></Share>
      </MenuBar>

      <RibbonView />

      <FormulaBar>
        <NameBox><input aria-label="Caixa de nome" defaultValue="C6" /><Caret size={7} /></NameBox>
        <Grip $w={28}><DotsIcon /></Grip>
        <EntryButtons>
          <EntryButton aria-label="Cancelar"><svg width="11" height="11" viewBox="0 0 11 11" stroke="currentColor" strokeWidth="1.500"><path d="M.5.500l10 10M10.500.5l-10 10" /></svg></EntryButton>
          <EntryButton aria-label="Inserir"><svg width="13" height="10" viewBox="0 0 13 10" fill="none" stroke="currentColor" strokeWidth="2.200"><path d="M1 5.500l3.500 3L12 1" /></svg></EntryButton>
          <EntryButton aria-label="Inserir função">
            <svg width="14" height="14" viewBox="0 0 14 14" fill="#444" fontFamily="Liberation Serif, serif" fontStyle="italic" fontWeight="700"><text x="2" y="11" fontSize="14">f</text><text x="7" y="12" fontSize="10">x</text></svg>
          </EntryButton>
        </EntryButtons>
        <FormulaField><input aria-label="Barra de fórmulas" defaultValue="02/01/2018" /><Chevron /></FormulaField>
      </FormulaBar>

      <Workspace>
        <SheetPane>
          <ColumnHeads>
            <Corner><svg width="10" height="10" viewBox="0 0 10 10"><path d="M10 0v10H0z" fill="#b4b4b4" /></svg></Corner>
            {columns.map(([name, w]) => <ColumnHead key={name} $w={w} $on={name === "C"}>{name}</ColumnHead>)}
          </ColumnHeads>
          <SheetBody>
            <RowHeads>{rowHeights.map((h, i) => <RowHead key={i} $h={h} $on={i === 5}>{i + 1}</RowHead>)}</RowHeads>
            <Canvas>
              <SiteNav>
                <Brand href="#"><BulbIcon /><BrandName>LUZ</BrandName><BrandTag>Planilhas<br />Empresariais</BrandTag></Brand>
                <NavLinks>{sections.map((s, i) => <NavLink key={s} href="#" $on={i === 1}>{s}</NavLink>)}</NavLinks>
              </SiteNav>
              <MonthBar><Months>{months.map((m, i) => <Month key={m} href="#" $on={i === 0}>{m}</Month>)}</Months></MonthBar>
              <Content>
                <ExpenseTable />
                <SummaryGap />
                <SummaryTable />
              </Content>
            </Canvas>
          </SheetBody>
        </SheetPane>
        <VScroll>
          <ScrollButton aria-label="Rolar para cima"><ArrowIcon dir="up" /></ScrollButton>
          <VTrack><VThumb /></VTrack>
          <ScrollButton aria-label="Rolar para baixo"><ArrowIcon dir="down" /></ScrollButton>
        </VScroll>
      </Workspace>

      <TabBar>
        <TabArrow $pad={14} aria-label="Planilha anterior"><ArrowIcon dir="left" color={GREEN} /></TabArrow>
        <TabArrow aria-label="Próxima planilha"><ArrowIcon dir="right" color={GREEN} /></TabArrow>
        <More $w={27}>...</More>
        {sheetTabs.map(([name, w], i) => <SheetTab key={name} $w={w} $on={i === 0} $last={name === "INI"}>{name}</SheetTab>)}
        <More $w={18}>...</More>
        <More $w={34} aria-label="Nova planilha">
          <svg width="16" height="16" viewBox="0 0 16 16" fill="none" stroke="#777"><circle cx="8" cy="8" r="7.300" /><path d="M8 4v8M4 8h8" strokeWidth="2" /></svg>
        </More>
        <TabSpacer />
        <Grip $w={32}><DotsIcon /></Grip>
        <HScroll>
          <ScrollButton aria-label="Rolar para a esquerda"><ArrowIcon dir="left" /></ScrollButton>
          <HTrack><HThumb /></HTrack>
          <ScrollButton aria-label="Rolar para a direita"><ArrowIcon dir="right" /></ScrollButton>
        </HScroll>
      </TabBar>

      <StatusBar>
        <StatusText>Pronto</StatusText>
        <svg width="14" height="13" viewBox="0 0 14 13" fill="none" stroke="#666"><path d="M2.500 5v7.500h10v-10H6" /><path d="M6 3h7M4 6.500h8M4 8.500h8M4 10.500h8M6.500 5v7M9.500 5v7" /><circle cx="3" cy="3" r="2.600" fill="#555" stroke="none" /></svg>
        <TabSpacer />
        <ViewButton $on aria-label="Normal"><svg width="13" height="13" viewBox="0 0 13 13" fill="none" stroke="#666"><path d="M.5.500h12v12H.500zM.5 4.500h12M.5 8.500h12M4.500.5v12M8.500.5v12" /></svg></ViewButton>
        <ViewButton aria-label="Layout da página"><svg width="14" height="13" viewBox="0 0 14 13" fill="none" stroke="#666"><path d="M.5.500h13v12H.500zM3.500 2.500h7v8h-7zM5 4.500h4M5 6.500h4M5 8.500h4" /></svg></ViewButton>
        <ViewButton aria-label="Quebra de página"><svg width="14" height="13" viewBox="0 0 14 13" fill="none" stroke="#666"><path d="M.5.500h13v12H.500zM4.500.5v7h5v-7" /></svg></ViewButton>
        <ZoomButton aria-label="Diminuir zoom"><svg width="6" height="2"><path d="M0 0h6v2H0z" fill="#555" /></svg></ZoomButton>
        <ZoomSlider type="range" aria-label="Zoom" min={10} max={187} defaultValue={90} />
        <ZoomButton aria-label="Aumentar zoom"><svg width="7" height="7" viewBox="0 0 7 7"><path d="M2.500 0h2v7h-2zM0 2.500h7v2H0z" fill="#555" /></svg></ZoomButton>
        <ZoomLevel>90%</ZoomLevel>
      </StatusBar>
      <Taskbar />
    </Window>
  );
}
